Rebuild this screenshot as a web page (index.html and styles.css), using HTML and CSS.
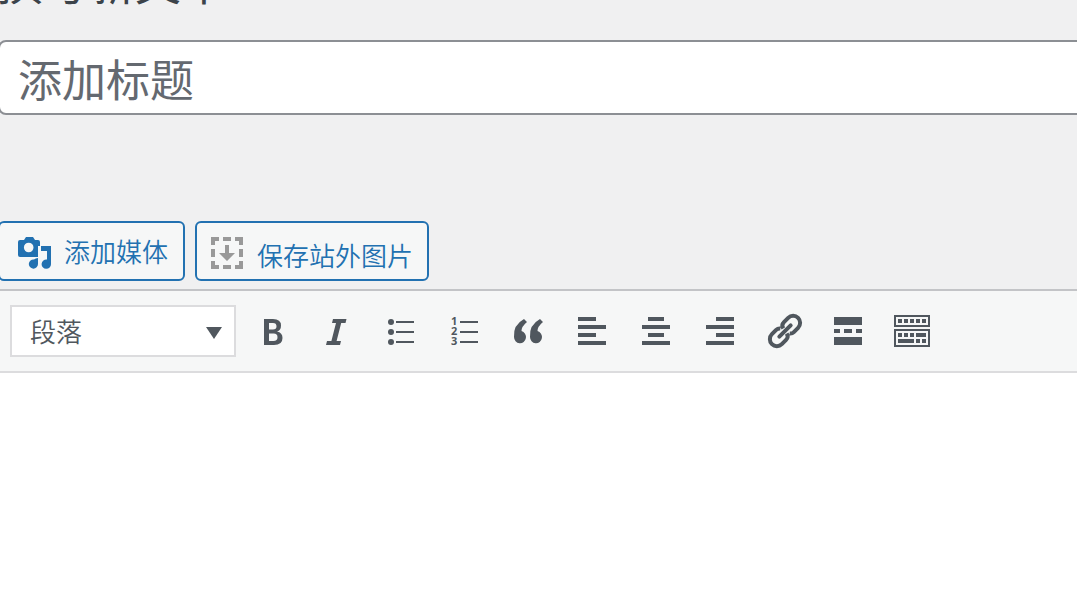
FILE: index.html
```html
<!DOCTYPE html>
<html lang="zh-CN">
<head>
<meta charset="utf-8">
<meta name="viewport" content="width=device-width, initial-scale=1">
<title>撰写新文章</title>
<link rel="stylesheet" href="styles.css">
</head>
<body>
<main class="page">
  <h1 class="heading">撰写新文章</h1>
  <input class="title-input" type="text" placeholder="添加标题" aria-label="添加标题">
  <div class="media-row">
    <button class="media-button" type="button">
      <svg class="media-icon" viewBox="0 0 32 32" aria-hidden="true">
        <path fill="currentColor" fill-rule="evenodd" d="M6 3 8 0h7l2 3h3q2 0 2 2v4h-2v11H2q-2 0-2-2V5q0-2 2-2zM10.700 5.700a4.800 4.800 0 1 0 0 9.600a4.800 4.800 0 0 0 0-9.600z"/>
        <path fill="currentColor" d="M23 9h10v18a4.700 4.700 0 1 1-4-4.500V14h-6zM20 21v6a4.600 4.600 0 1 1-4-4.500q1.500-1.500 4-1.500z"/>
      </svg>
      <span>添加媒体</span>
    </button>
    <button class="media-button media-button-save" type="button">
      <svg class="media-icon save-icon" viewBox="0 0 32 32" aria-hidden="true">
        <path fill="currentColor" d="M0 0h8v4H4v4H0zM12 0h8v4h-8zM24 0h8v8h-4V4h-4zM0 12h4v8H0zM28 12h4v8h-4zM0 24h4v4h4v4H0zM12 28h8v4h-8zM28 24h4v8h-8v-4h4zM14 8h4v8h6l-8 8-8-8h6z"/>
      </svg>
      <span class="save-label">保存站外图片</span>
    </button>
  </div>
  <section class="editor">
    <div class="toolbar" role="toolbar" aria-label="格式">
      <div class="format">
        <select class="format-select" aria-label="段落格式"><option>段落</option></select>
        <svg class="format-arrow" viewBox="0 0 16 12" aria-hidden="true"><path fill="currentColor" d="M0 0h16L8 12z"/></svg>
      </div>
      <button class="tool" type="button" aria-label="粗体"><svg viewBox="0 0 40 40"><path fill="currentColor" fill-rule="evenodd" d="M12 8h9q8 0 8 6.500 0 5-4 6 5.500 1 5.500 6.500Q30.500 34 22 34H12zM17 12v6.500h4q3.500 0 3.500-3.200T21 12zM17 22.500V30h4.500q4 0 4-3.800t-4-3.700z"/></svg></button>
      <button class="tool" type="button" aria-label="斜体"><svg viewBox="0 0 40 40"><path fill="currentColor" d="M17 8h13.500l-1 4h-4.300l-4.600 18h4.400l-1 4H10l1-4h4.400L20 12h-4z"/></svg></button>
      <button class="tool" type="button" aria-label="项目符号列表"><svg viewBox="0 0 40 40"><g fill="currentColor"><circle cx="11" cy="11" r="3"/><circle cx="11" cy="21" r="3"/><circle cx="11" cy="31" r="3"/><path d="M16 10h18v2H16zM16 20h18v2H16zM16 30h18v2H16z"/></g></svg></button>
      <button class="tool" type="button" aria-label="编号列表"><svg viewBox="0 0 40 40"><g fill="currentColor"><path d="M16 10h18v2H16zM16 20h18v2H16zM16 30h18v2H16z"/><g class="digits"><text x="7" y="14">1</text><text x="7" y="24">2</text><text x="7" y="34">3</text></g></g></svg></button>
      <button class="tool" type="button" aria-label="段落引用"><svg viewBox="0 0 40 40"><path fill="currentColor" d="M16 8 19 11Q13.500 15.500 13.500 20a6 6.200 0 1 1-7.500 6Q5 14 16 8zM32 8 35 11Q29.500 15.500 29.500 20a6 6.200 0 1 1-7.500 6Q21 14 32 8z"/></svg></button>
      <button class="tool" type="button" aria-label="左对齐"><svg viewBox="0 0 40 40"><path fill="currentColor" d="M6 6h18v4H6zM6 14h28v4H6zM6 22h18v4H6zM6 30h28v4H6z"/></svg></button>
      <button class="tool" type="button" aria-label="居中对齐"><svg viewBox="0 0 40 40"><path fill="currentColor" d="M12 6h16v4H12zM6 14h28v4H6zM12 22h16v4H12zM6 30h28v4H6z"/></svg></button>
      <button class="tool" type="button" aria-label="右对齐"><svg viewBox="0 0 40 40"><path fill="currentColor" d="M16 6h18v4H16zM6 14h28v4H6zM16 22h18v4H16zM6 30h28v4H6z"/></svg></button>
      <button class="tool" type="button" aria-label="插入链接"><svg viewBox="0 0 40 40"><g transform="rotate(-45 21 20)" fill="none" stroke="currentColor" stroke-width="4"><path d="M21.500 17q1-4 5-4h6a7 7 0 0 1 0 14h-6q-2.500 0-4-2M20.500 23q-1 4-5 4h-6a7 7 0 0 1 0-14h6q2.500 0 4 2"/><path d="M13 20h16" stroke-linecap="round"/></g></svg></button>
      <button class="tool" type="button" aria-label="插入“更多”标签"><svg viewBox="0 0 40 40"><path fill="currentColor" d="M6 6h28v8H6zM6 18h6v4H6zM16 18h8v4h-8zM28 18h6v4h-6zM6 26h28v8H6z"/></svg></button>
      <button class="tool" type="button" aria-label="工具栏切换"><svg viewBox="0 0 40 40"><path fill="none" stroke="currentColor" stroke-width="2" d="M3 5h34v10H3zM3 19h34v16H3z"/><path fill="currentColor" d="M6 8h4v4H6zM12 8h4v4h-4zM18 8h4v4h-4zM24 8h4v4h-4zM30 8h4v4h-4zM6 22h4v4H6zM12 22h4v4h-4zM18 22h4v4h-4zM24 22h10v4H24zM6 28h16v4H6zM24 28h4v4h-4zM30 28h4v4h-4z"/></svg></button>
    </div>
    <div class="content" contenteditable="true" role="textbox" aria-label="正文"></div>
  </section>
</main>
</body>
</html>
```
FILE: styles.css
```css
* { box-sizing: border-box; }

body {
  margin: 0;
  background: #f0f0f1;
  color: #50575e;
  font-family: "Noto Sans CJK SC", sans-serif;
}

.page {
  display: flex;
  flex-direction: column;
  min-height: 100vh;
  overflow: hidden;
}

.heading {
  margin: -50px 0 30px -3px;
  color: #3c434a;
  font-size: 46px;
  font-weight: 400;
  line-height: 60px;
}

.title-input {
  height: 75px;
  margin: 0 -12px 0 -2px;
  padding: 0 18px;
  border: 2px solid #8c8f94;
  border-radius: 8px;
  background: #fff;
  color: #2c3338;
  font-family: inherit;
  font-size: 44px;
  font-weight: 400;
}

.title-input::placeholder {
  color: #646970;
  opacity: 1;
}

.media-row {
  display: flex;
  gap: 10px;
  margin: 106px 0 8px -2px;
}

.media-button {
  display: flex;
  align-items: center;
  gap: 14px;
  height: 60px;
  padding: 0 15px 0 18px;
  border: 2px solid #2271b1;
  border-radius: 6px;
  background: #f6f7f7;
  color: #2271b1;
  font-family: inherit;
  font-size: 26px;
  font-weight: 350;
  line-height: 36px;
  white-space: nowrap;
}

.media-button-save {
  padding-right: 14px;
  padding-left: 14px;
}

.media-icon {
  width: 32px;
  height: 32px;
  margin-top: 4px;
  overflow: visible;
}

.save-icon { color: #999; }

.save-label { padding-top: 8px; }

.editor {
  display: flex;
  flex: 1;
  flex-direction: column;
  border-top: 2px solid #c3c4c7;
}

.toolbar {
  display: flex;
  align-items: center;
  padding: 14px 10px;
  border-bottom: 2px solid #dcdcde;
  background: #f6f7f7;
}

.format {
  display: grid;
  width: 226px;
  margin-right: 4px;
}

.format-select {
  grid-area: 1 / 1;
  height: 52px;
  padding: 0 18px 2px;
  border: 2px solid #dcdcde;
  border-radius: 0;
  appearance: none;
  background: #fff;
  color: #50575e;
  font-family: inherit;
  font-size: 26px;
  font-weight: 350;
}

.format-arrow {
  grid-area: 1 / 1;
  place-self: center end;
  width: 16px;
  height: 12px;
  margin: 4px 14px 0 0;
  pointer-events: none;
}

.tool {
  display: flex;
  align-items: center;
  justify-content: center;
  width: 64px;
  height: 48px;
  padding: 0;
  border: 0;
  background: none;
  color: #50575e;
}

.tool svg {
  width: 40px;
  height: 40px;
}

.digits {
  font-family: "Open Sans", sans-serif;
  font-size: 11px;
  font-weight: 700;
}

.content {
  flex: 1;
  min-height: 160px;
  background: #fff;
}
```
